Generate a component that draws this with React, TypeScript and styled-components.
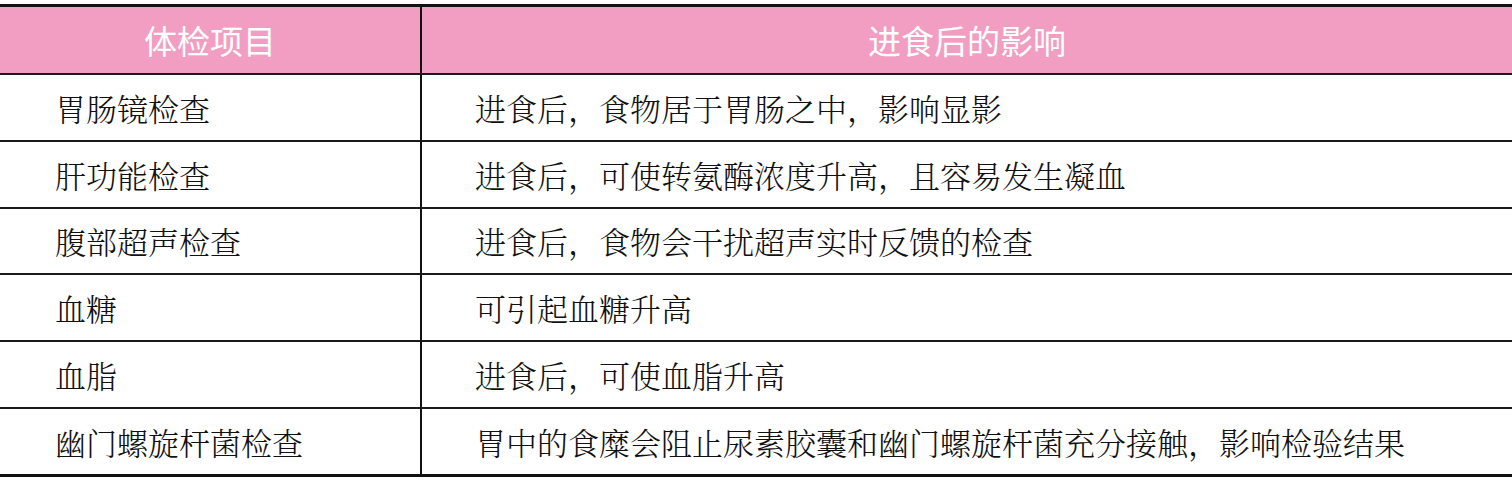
import React from 'react';
import styled, { createGlobalStyle } from 'styled-components';

const rows: [string, string][] = [
  ['胃肠镜检查', '进食后，食物居于胃肠之中，影响显影'],
  ['肝功能检查', '进食后，可使转氨酶浓度升高，且容易发生凝血'],
  ['腹部超声检查', '进食后，食物会干扰超声实时反馈的检查'],
  ['血糖', '可引起血糖升高'],
  ['血脂', '进食后，可使血脂升高'],
  ['幽门螺旋杆菌检查', '胃中的食糜会阻止尿素胶囊和幽门螺旋杆菌充分接触，影响检验结果'],
];

const App: React.FC = () => {
  return (
    <>
      <GlobalStyle />
      <Page>
        <Table>
          <HeadRow>
            <HeadCell>体检项目</HeadCell>
            <HeadCell divider>进食后的影响</HeadCell>
          </HeadRow>
          {rows.map(([item, effect]) => (
            <BodyRow key={item}>
              <Cell>{item}</Cell>
              <Cell divider>{effect}</Cell>
            </BodyRow>
          ))}
        </Table>
      </Page>
    </>
  );
};

const GlobalStyle = createGlobalStyle`
  html, body {
    margin: 0;
    padding: 0;
    background: #ffffff;
  }
`;

const Page = styled.div`
  padding-top: 4px;
  width: 1512px;
`;

const Table = styled.div`
  display: flex;
  flex-direction: column;
  border-top: 3px solid #111;
  border-bottom: 3px solid #111;
`;

const HeadRow = styled.div`
  display: grid;
  grid-template-columns: 420px 1fr;
  height: 66px;
  background: #f19ec2;
`;

const BodyRow = styled.div`
  display: grid;
  grid-template-columns: 420px 1fr;
  height: 66.8px;
  box-sizing: border-box;
  border-top: 2px solid #1a1a1a;
`;

const HeadCell = styled.div<{ divider?: boolean }>`
  display: flex;
  align-items: center;
  justify-content: center;
  color: #ffffff;
  font-family: 'Noto Sans CJK SC', sans-serif;
  font-size: 33px;
  font-weight: 400;
  border-left: ${p => (p.divider ? '2px solid #111' : 'none')};
`;

const Cell = styled.div<{ divider?: boolean }>`
  display: flex;
  align-items: center;
  padding-left: ${p => (p.divider ? '53px' : '55px')};
  color: #111;
  font-family: 'Noto Serif CJK SC', 'AR PL UMing CN', 'Noto Sans CJK SC', serif;
  font-size: 31px;
  font-weight: 300;
  white-space: nowrap;
  border-left: ${p => (p.divider ? '2px solid #111' : 'none')};
`;

export default App;
